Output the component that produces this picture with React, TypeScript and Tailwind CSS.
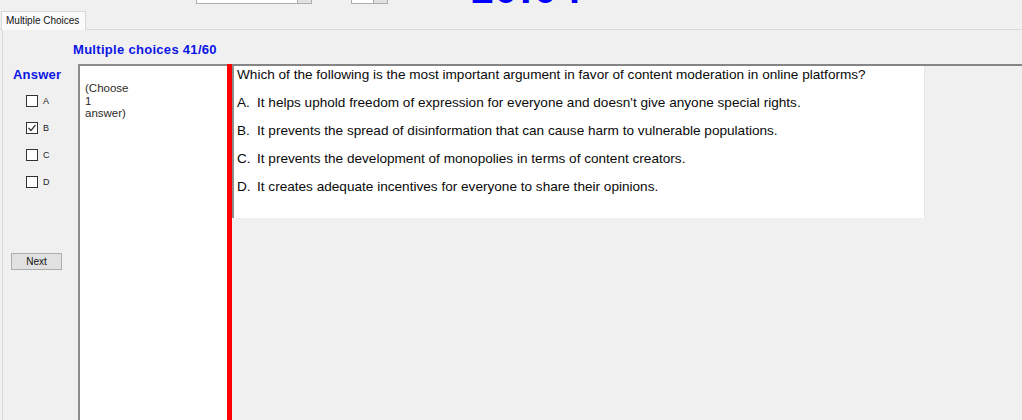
import React from 'react';

const options = [
  { key: 'A', text: "It helps uphold freedom of expression for everyone and doesn't give anyone special rights.", checked: false },
  { key: 'B', text: 'It prevents the spread of disinformation that can cause harm to vulnerable populations.', checked: true },
  { key: 'C', text: 'It prevents the development of monopolies in terms of content creators.', checked: false },
  { key: 'D', text: 'It creates adequate incentives for everyone to share their opinions.', checked: false },
];

const CheckBox: React.FC<{ checked: boolean }> = ({ checked }) => (
  <div className="w-[12px] h-[12px] border border-[#333] bg-white flex items-center justify-center">
    {checked && (
      <svg width="10" height="10" viewBox="0 0 10 10">
        <path d="M1.5 5 L4 7.5 L8.5 2" fill="none" stroke="#333" strokeWidth="1.2" />
      </svg>
    )}
  </div>
);

export default function App() {
  return (
    <div className="w-[1022px] h-[420px] overflow-hidden bg-[#f0f0f0] flex flex-col font-['Liberation_Sans',Arial,sans-serif] text-black">
      {/* top strip, mostly scrolled out of view */}
      <div className="h-[11px] flex items-start overflow-hidden shrink-0">
        <div className="ml-[196px] w-[116px] h-[4px] bg-white border-x border-b border-[#adadad] flex justify-end">
          <div className="w-[14px] h-full bg-[#e1e1e1] border-l border-[#adadad]" />
        </div>
        <div className="ml-[39px] w-[37px] h-[4px] bg-white border-x border-b border-[#adadad] flex justify-end">
          <div className="w-[14px] h-full bg-[#e1e1e1] border-l border-[#adadad]" />
        </div>
        <div className="ml-[82px] -mt-[32px] text-[42px] leading-[42px] font-bold text-[#0000ff] tracking-[1px]">10:04</div>
      </div>

      {/* tab row */}
      <div className="h-[19px] flex items-end border-b border-[#d9d9d9] shrink-0">
        <div className="ml-[1px] h-[19px] -mb-px relative z-10 w-[85px] bg-[#fbfbfb] border-t border-x border-[#d9d9d9] pl-[4px] pt-[3px] text-[10px] leading-[11px] text-[#111]">
          Multiple Choices
        </div>
      </div>

      {/* panel */}
      <div className="flex-1 ml-[2px] border-l border-[#d9d9d9] flex flex-col min-h-0">
        <div className="pl-[70px] pt-[12px] h-[28px] text-[13px] leading-[16px] font-bold text-[#0a14e6] tracking-[0.3px] shrink-0">
          Multiple choices 41/60
        </div>
        <div className="mt-[6px] flex flex-1 min-h-0">
          {/* answer column */}
          <div className="w-[75px] shrink-0 flex flex-col">
            <div className="pl-[10px] pt-[3px] text-[13px] leading-[16px] font-bold text-[#0a14e6] tracking-[0.2px]">Answer</div>
            <div className="mt-[4px] flex flex-col">
              {options.map((o) => (
                <div key={o.key} className="h-[27px] pl-[23px] flex items-center gap-[5px]">
                  <CheckBox checked={o.checked} />
                  <span className="text-[9px] leading-[10px] text-[#222]">{o.key}</span>
                </div>
              ))}
            </div>
            <button className="mt-[58px] ml-[8px] w-[51px] h-[17px] bg-[#e1e1e1] border border-[#adadad] text-[10px] leading-[14px] text-[#111]">
              Next
            </button>
          </div>

          {/* choose box */}
          <div className="w-[149px] shrink-0 bg-white border-l-2 border-t-2 border-[#8c8c8c] pl-[5px] pt-[16px] text-[11.5px] leading-[12.5px] text-[#2e2a28]">
            (Choose
            <br />1<br />
            answer)
          </div>

          {/* red divider */}
          <div className="w-[5px] shrink-0 bg-[#ff0000]" />

          {/* question area */}
          <div className="flex-1 border-t-2 border-[#858585]">
            <div className="w-[693px] h-[152px] bg-white border-l-2 border-r border-l-[#8c8c8c] border-r-[#e6e6e6] pl-[3px] pt-[1px]">
              <div className="h-[16px] text-[13.6px] leading-[16px] text-[#0a0a0a]">
                Which of the following is the most important argument in favor of content moderation in online platforms?
              </div>
              <div className="mt-[6px]">
                {options.map((o) => (
                  <div key={o.key} className="h-[28px] flex text-[13.6px] leading-[28px] text-[#0a0a0a]">
                    <span className="w-[20px] shrink-0">{o.key}.</span>
                    <span>{o.text}</span>
                  </div>
                ))}
              </div>
            </div>
          </div>
        </div>
      </div>
    </div>
  );
}
